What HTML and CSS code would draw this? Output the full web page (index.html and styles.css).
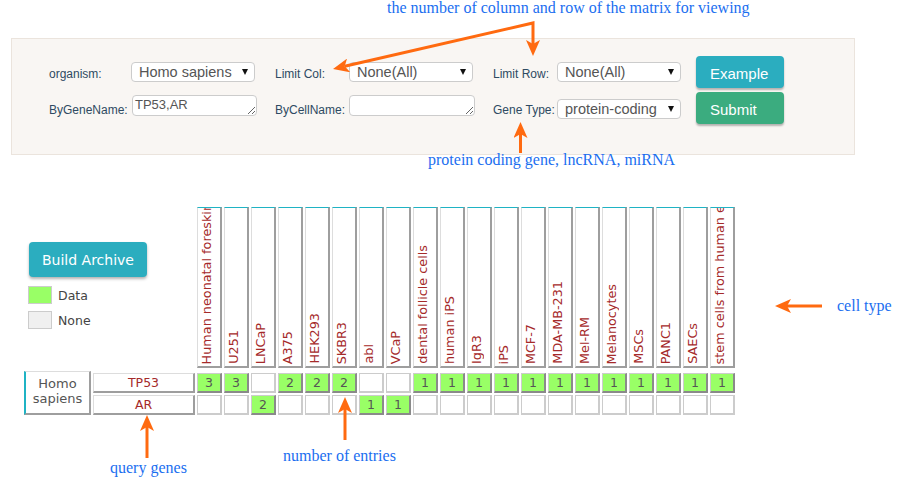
FILE: index.html
```html
<!DOCTYPE html>
<html lang="en">
<head>
<meta charset="utf-8">
<title>Archive matrix</title>
<link rel="stylesheet" href="styles.css">
</head>
<body>
<div class="page">
  <form class="panel">
    <div class="form-grid">
      <label class="lbl">organism:</label>
      <div class="select"><span>Homo sapiens</span><i class="caret"></i></div>
      <label class="lbl g">Limit Col:</label>
      <div class="select"><span>None(All)</span><i class="caret"></i></div>
      <label class="lbl g">Limit Row:</label>
      <div class="select"><span>None(All)</span><i class="caret"></i></div>
      <button type="button" class="btn btn-ex">Example</button>

      <label class="lbl">ByGeneName:</label>
      <textarea class="ta first">TP53,AR</textarea>
      <label class="lbl g">ByCellName:</label>
      <textarea class="ta"></textarea>
      <label class="lbl g">Gene Type:</label>
      <div class="select sm"><span>protein-coding</span><i class="caret"></i></div>
      <button type="button" class="btn btn-sub">Submit</button>
    </div>
  </form>

  <div class="matrix">
    <div class="side">
      <button type="button" class="build">Build Archive</button>
      <div class="legend">
        <div class="item"><span class="sw on"></span>Data</div>
        <div class="item"><span class="sw off"></span>None</div>
      </div>
    </div>
    <div class="h"><span>Human neonatal foreskin</span></div>
    <div class="h"><span>U251</span></div>
    <div class="h"><span>LNCaP</span></div>
    <div class="h"><span>A375</span></div>
    <div class="h"><span>HEK293</span></div>
    <div class="h"><span>SKBR3</span></div>
    <div class="h"><span>abl</span></div>
    <div class="h"><span>VCaP</span></div>
    <div class="h"><span>dental follicle cells</span></div>
    <div class="h"><span>human iPS</span></div>
    <div class="h"><span>IgR3</span></div>
    <div class="h"><span>iPS</span></div>
    <div class="h"><span>MCF-7</span></div>
    <div class="h"><span>MDA-MB-231</span></div>
    <div class="h"><span>Mel-RM</span></div>
    <div class="h"><span>Melanocytes</span></div>
    <div class="h"><span>MSCs</span></div>
    <div class="h"><span>PANC1</span></div>
    <div class="h"><span>SAECs</span></div>
    <div class="h"><span>stem cells from human exfoliated deciduous teeth</span></div>

    <div class="sp">Homo<br>sapiens</div>
    <div class="gene">TP53</div>
    <div class="c on">3</div><div class="c on">3</div><div class="c"></div><div class="c on">2</div><div class="c on">2</div><div class="c on">2</div><div class="c"></div><div class="c"></div><div class="c on">1</div><div class="c on">1</div><div class="c on">1</div><div class="c on">1</div><div class="c on">1</div><div class="c on">1</div><div class="c on">1</div><div class="c on">1</div><div class="c on">1</div><div class="c on">1</div><div class="c on">1</div><div class="c on">1</div>

    <div class="gene">AR</div>
    <div class="c"></div><div class="c"></div><div class="c on">2</div><div class="c"></div><div class="c"></div><div class="c"></div><div class="c on">1</div><div class="c on">1</div><div class="c"></div><div class="c"></div><div class="c"></div><div class="c"></div><div class="c"></div><div class="c"></div><div class="c"></div><div class="c"></div><div class="c"></div><div class="c"></div><div class="c"></div><div class="c"></div>
  </div>

  <div class="note n1">the number of column and row of the matrix for viewing</div>
  <div class="note n2">protein coding gene, lncRNA, miRNA</div>
  <div class="note n3">cell type</div>
  <div class="note n4">query genes</div>
  <div class="note n5">number of entries</div>

  <svg class="arrows" width="900" height="480" viewBox="0 0 900 480" xmlns="http://www.w3.org/2000/svg">
    <defs>
      <marker id="ah" viewBox="0 0 16 14" refX="4" refY="7" markerWidth="16" markerHeight="14" markerUnits="userSpaceOnUse" orient="auto-start-reverse">
        <path d="M16 7 L0 0 L4 7 L0 14 Z" fill="#ff6a10"/>
      </marker>
    </defs>
    <g stroke="#ff6a10" stroke-width="3" fill="none">
      <path d="M344.7 66.3 L533 23 L533 44" marker-start="url(#ah)" marker-end="url(#ah)" stroke-linejoin="miter"/>
      <path d="M520.5 153 L520.5 134" marker-end="url(#ah)"/>
      <path d="M822 306 L787 306" marker-end="url(#ah)"/>
      <path d="M147 458 L147 427" marker-end="url(#ah)"/>
      <path d="M345 440 L345 409" marker-end="url(#ah)"/>
    </g>
  </svg>
</div>
</body>
</html>
```
FILE: styles.css
```css
body {
  margin: 0;
  background: #fff;
  font-family: "Liberation Sans", Arial, sans-serif;
}

.page {
  position: relative;
  width: 900px;
  height: 480px;
  overflow: hidden;
  padding-top: 38px;
  box-sizing: border-box;
}

/* ---------- search panel ---------- */
.panel {
  margin: 0 0 0 11px;
  width: 844px;
  height: 117px;
  box-sizing: border-box;
  border: 1px solid #ebe4dd;
  background: #f9f6f3;
  padding: 17px 0 0 37px;
}

.form-grid {
  display: grid;
  grid-template-columns: 82px 126px 92px 126px 82px 124px 103px;
  grid-template-rows: 32px 32px;
  row-gap: 4px;
  align-items: center;
}

.lbl {
  font-size: 12px;
  color: #2e4a62;
  padding-top: 3px;
  white-space: nowrap;
}

.lbl.g {
  padding-left: 18px;
}

.select {
  width: 124px;
  height: 20px;
  box-sizing: border-box;
  border: 1px solid #ccc;
  border-radius: 4px;
  background: #fff;
  display: flex;
  align-items: center;
  justify-content: space-between;
  padding: 0 6px 0 7px;
  font-size: 14.5px;
  color: #555;
  white-space: nowrap;
}

.select.sm {
  margin-top: 1px;
}

.caret {
  width: 0;
  height: 0;
  border-left: 3px solid transparent;
  border-right: 3px solid transparent;
  border-top: 6px solid #111;
}

.ta {
  display: block;
  width: 126px;
  height: 21px;
  box-sizing: border-box;
  margin: 3px 0 0 0;
  align-self: start;
  border: 1px solid #ccc;
  border-radius: 4px;
  background: #fff;
  padding: 1px 2px 0;
  font: 13px "Liberation Sans", Arial, sans-serif;
  color: #555;
  resize: both;
  overflow: hidden;
}

.ta.first {
  width: 125px;
  margin-left: 1px;
}

.btn {
  justify-self: end;
  width: 88px;
  height: 32px;
  border: none;
  border-radius: 4px;
  color: #fff;
  font: 15px "Liberation Sans", Arial, sans-serif;
  text-align: left;
  padding: 3px 0 0 14px;
  box-shadow: 0 2px 2px rgba(0, 0, 0, 0.28);
}

.btn-ex {
  background: #2badbf;
}

.btn-sub {
  background: #3bac7f;
}

/* ---------- matrix ---------- */
.matrix {
  margin: 52px 0 0 24px;
  display: grid;
  grid-template-columns: 67px 102px repeat(20, 25px);
  grid-template-rows: 164px 20px 20px;
  column-gap: 2px;
  row-gap: 2px;
  font-family: "DejaVu Sans", Verdana, sans-serif;
}

.side {
  grid-column: 1 / 3;
  grid-row: 1;
  padding: 35px 0 0 5px;
}

.build {
  display: block;
  width: 118px;
  height: 35px;
  border: none;
  border-radius: 4px;
  background: #2badbf;
  color: #fff;
  font: 14px "DejaVu Sans", Verdana, sans-serif;
  box-shadow: 0 2px 3px rgba(0, 0, 0, 0.3);
}

.legend {
  margin-top: 9px;
  display: flex;
  flex-direction: column;
  gap: 7px;
}

.item {
  display: flex;
  align-items: center;
  gap: 6px;
  font-size: 12.5px;
  color: #444;
}

.sw {
  width: 24px;
  height: 18px;
  box-sizing: border-box;
  border: 1px solid #ccc;
  margin-left: -1px;
}

.sw.on {
  background: #99ff66;
}

.sw.off {
  background: #f0f0f0;
}

.h {
  height: 161px;
  box-sizing: border-box;
  border-top: 1px solid #1fb3c4;
  border-left: 1px solid #ddd;
  border-right: 2px solid #9e9e9e;
  border-bottom: 2px solid #9e9e9e;
  background: #fff;
  overflow: hidden;
  display: flex;
  flex-direction: column;
  justify-content: flex-end;
  align-items: flex-start;
  padding: 0 0 2px 1px;
}

.h span {
  writing-mode: vertical-rl;
  transform: rotate(180deg);
  white-space: nowrap;
  font-size: 12.8px;
  line-height: 15px;
  color: #a52a2a;
}

.sp {
  grid-row: 2 / 4;
  grid-column: 1;
  margin-top: -2px;
  box-sizing: border-box;
  border: 1px solid #ddd;
  border-left: 2px solid #1fb3c4;
  border-right: 2px solid #9e9e9e;
  border-bottom: 2px solid #9e9e9e;
  display: flex;
  align-items: center;
  justify-content: center;
  text-align: center;
  font-size: 13px;
  line-height: 15px;
  color: #555;
  padding-bottom: 4px;
}

.gene {
  box-sizing: border-box;
  border: 1px solid #ddd;
  border-right: 2px solid #9e9e9e;
  border-bottom: 2px solid #9e9e9e;
  display: flex;
  align-items: center;
  justify-content: center;
  font-size: 12.5px;
  color: #a52a2a;
}

.c {
  box-sizing: border-box;
  border: 1px solid #ccc;
  border-right-width: 2px;
  border-bottom-width: 2px;
  display: flex;
  align-items: center;
  justify-content: center;
  font-size: 12.5px;
  color: #555;
}

.c.on {
  background: #99ff66;
  border-color: #ccc #8a8a8a #8a8a8a #ccc;
}

/* ---------- annotations ---------- */
.note {
  position: absolute;
  font: 16px "Liberation Serif", "Times New Roman", serif;
  line-height: 16px;
  color: #1a6ef0;
  white-space: nowrap;
}

.n1 { left: 387px; top: 0; }
.n2 { left: 428px; top: 152px; }
.n3 { left: 837px; top: 298px; }
.n4 { left: 110px; top: 460px; }
.n5 { left: 283px; top: 448px; }

.arrows {
  position: absolute;
  left: 0;
  top: 0;
  pointer-events: none;
}
```
